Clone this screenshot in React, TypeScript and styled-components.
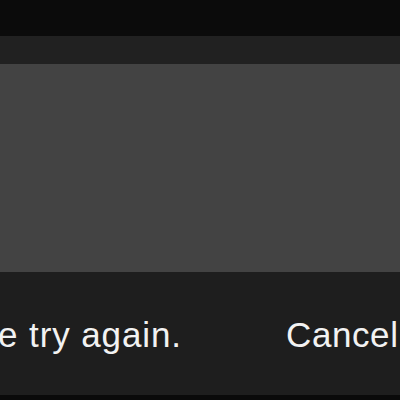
import React from "react";
import styled, { createGlobalStyle } from "styled-components";

const Global = createGlobalStyle`
  html, body { margin: 0; padding: 0; background: #0a0a0a; }
  body { width: 400px; height: 400px; overflow: hidden; }
`;

const Screen = styled.div`
  width: 400px;
  height: 400px;
  display: flex;
  flex-direction: column;
  background: #0a0a0a;
  font-family: "Liberation Sans", Arial, sans-serif;
`;

const StatusArea = styled.div`
  height: 36px;
  background: #0b0b0b;
`;

const Header = styled.div`
  height: 28px;
  background: #212121;
`;

const Preview = styled.div`
  height: 208px;
  background: #434343;
`;

const Snackbar = styled.div`
  height: 123px;
  background: #1e1e1e;
  display: flex;
  align-items: center;
  padding-top: 2px;
  box-sizing: border-box;
`;

const Message = styled.div`
  width: 182px;
  flex: none;
  overflow: hidden;
  display: flex;
  justify-content: flex-end;
  white-space: nowrap;
  color: #f2f2f2;
  font-size: 35px;
  letter-spacing: 0.9px;
`;

const Action = styled.button`
  margin-left: 104px;
  background: none;
  border: none;
  padding: 0;
  color: #f2f2f2;
  font-family: inherit;
  font-size: 35px;
  letter-spacing: 0.6px;
  white-space: nowrap;
`;

export default function App() {
  return (
    <>
      <Global />
      <Screen>
        <StatusArea />
        <Header />
        <Preview />
        <Snackbar>
          <Message>
            <span>Something went wrong. Please try again.</span>
          </Message>
          <Action>Cancel</Action>
        </Snackbar>
      </Screen>
    </>
  );
}
